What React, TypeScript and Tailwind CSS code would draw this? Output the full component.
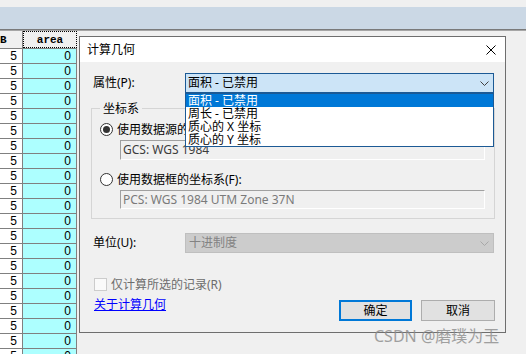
import * as React from "react"

const rows = Array.from({ length: 21 }, (_, i) => i)

const listItems = ["面积 - 已禁用", "周长 - 已禁用", "质心的 X 坐标", "质心的 Y 坐标"]

function Chevron({ color }: { color: string }) {
  return (
    <svg width="9" height="5" viewBox="0 0 9 5" className="shrink-0">
      <polyline points="0.5,0.5 4.5,4.5 8.5,0.5" fill="none" stroke={color} strokeWidth="1" />
    </svg>
  )
}

function AttributeTable() {
  return (
    <div className="flex w-[77px] shrink-0 flex-col font-['Liberation_Sans',sans-serif] text-[12px] text-black">
      <div className="flex h-[18px] border-b border-[#808080] bg-[#f0f0f0]">
        <div className="w-[23px] border-r border-[#808080] pt-[2px] font-['Liberation_Mono',monospace] text-[11px] font-bold leading-[14px]">
          B
        </div>
        <div className="flex w-[54px] items-center justify-center border border-dotted border-black font-['Liberation_Mono',monospace] text-[11px] font-bold leading-[14px]">
          area
        </div>
      </div>
      {rows.map((r) => (
        <div key={r} className="flex h-[15px] border-b border-[#808080]">
          <div className="w-[23px] border-r border-[#808080] bg-white pr-[5px] text-right leading-[14px]">
            5
          </div>
          <div className="w-[54px] border-r border-[#808080] bg-[#adffff] pr-[5px] text-right leading-[14px]">
            0
          </div>
        </div>
      ))}
    </div>
  )
}

function Radio({ checked }: { checked?: boolean }) {
  return (
    <span className="flex h-[13px] w-[13px] shrink-0 items-center justify-center rounded-full border border-[#333333] bg-white">
      {checked && <span className="h-[7px] w-[7px] rounded-full bg-[#333333]" />}
    </span>
  )
}

function GeometryDialog() {
  return (
    <div className="ml-[2px] mt-[5px] flex h-[297px] w-[427px] shrink-0 flex-col border border-[#6e6e6e] bg-[#f0f0f0] text-[12px] text-black">
      {/* title bar */}
      <div className="flex h-[25px] items-center justify-between bg-white pl-[7px] pr-[9px]">
        <span className="leading-[16px]">计算几何</span>
        <svg width="10" height="10" viewBox="0 0 10 10">
          <path d="M0.5 0.5 L9.5 9.5 M9.5 0.5 L0.5 9.5" stroke="#000" strokeWidth="1" />
        </svg>
      </div>

      <div className="relative flex flex-1 flex-col">
        {/* 属性 */}
        <div className="mt-[11px] flex h-[20px] items-center pl-[13px]">
          <span className="w-[92px] leading-[16px]">属性(P):</span>
          <div className="flex h-[20px] w-[309px] items-center justify-between border border-[#1c5a95] bg-[#cce4f7] pl-[2px] pr-[4px]">
            <span className="leading-[16px]">面积 - 已禁用</span>
            <Chevron color="#404040" />
          </div>
        </div>

        {/* 坐标系 group */}
        <div className="ml-[11px] mt-[15px] flex h-[111px] w-[404px] flex-col border border-[#d5d5d5]">
          <span className="-mt-[8px] ml-[8px] h-[16px] w-fit bg-[#f0f0f0] px-[3px] leading-[16px]">坐标系</span>
          <div className="mt-[5px] flex h-[15px] items-center gap-[4px] pl-[8px]">
            <Radio checked />
            <span className="leading-[16px]">使用数据源的坐标系(S):</span>
          </div>
          <div className="ml-[28px] mt-[3px] flex h-[20px] w-[365px] items-center border border-[#a0a0a0] border-b-white border-r-white pl-[2px] text-[#3c3c3c]">
            <span className="leading-[16px]">GCS: WGS 1984</span>
          </div>
          <div className="mt-[12px] flex h-[15px] items-center gap-[4px] pl-[8px]">
            <Radio />
            <span className="leading-[16px]">使用数据框的坐标系(F):</span>
          </div>
          <div className="ml-[28px] mt-[3px] flex h-[19px] w-[365px] items-center border border-[#a0a0a0] border-b-white border-r-white pl-[2px] text-[#7a7a7a]">
            <span className="leading-[16px]">PCS: WGS 1984 UTM Zone 37N</span>
          </div>
        </div>

        {/* 单位 */}
        <div className="mt-[14px] flex h-[20px] items-center pl-[13px]">
          <span className="w-[92px] leading-[16px]">单位(U):</span>
          <div className="flex h-[20px] w-[309px] items-center justify-between border border-[#bfbfbf] bg-[#cccccc] pl-[3px] pr-[4px] text-[#838383]">
            <span className="leading-[16px]">十进制度</span>
            <Chevron color="#a8a8a8" />
          </div>
        </div>

        {/* checkbox */}
        <div className="mt-[25px] flex h-[13px] items-center gap-[4px] pl-[14px]">
          <span className="h-[13px] w-[13px] shrink-0 border border-[#cccccc] bg-[#fafafa]" />
          <span className="leading-[16px] text-[#6d6d6d]">仅计算所选的记录(R)</span>
        </div>

        {/* link + buttons */}
        <div className="mt-[6px] flex items-start justify-between pl-[14px] pr-[10px]">
          <a className="leading-[16px] text-[#0000ff] underline">关于计算几何</a>
          <div className="mt-[3px] flex gap-[9px]">
            <button className="flex h-[21px] w-[73px] items-center justify-center border-2 border-[#0078d7] bg-[#e1e1e1] leading-[16px]">
              确定
            </button>
            <button className="flex h-[21px] w-[74px] items-center justify-center border border-[#adadad] bg-[#e1e1e1] leading-[16px]">
              取消
            </button>
          </div>
        </div>

        {/* open dropdown list */}
        <div className="absolute left-[105px] top-[31px] flex h-[54px] w-[309px] flex-col border border-[#1c5a95] bg-white">
          {listItems.map((item, i) => (
            <div
              key={item}
              className={
                i === 0
                  ? "h-[13px] bg-[#0078d7] pl-[2px] leading-[13px] text-white"
                  : "h-[13px] pl-[2px] leading-[13px] text-black"
              }
            >
              {item}
            </div>
          ))}
        </div>
      </div>
    </div>
  )
}

export default function App() {
  return (
    <div className="relative h-[354px] w-[526px] overflow-hidden bg-[#f0f0f0] font-['Noto_Sans','Noto_Sans_CJK_SC',sans-serif]">
      <div className="h-[7px] bg-[#f0f0f0]" />
      <div className="h-[22px] bg-[#cbd8e5]" />
      <div className="h-px bg-[#7a7a7a]" />
      <div className="h-px bg-[#a6a6a6]" />
      <div className="flex items-start">
        <AttributeTable />
        <GeometryDialog />
      </div>
      <span className="absolute left-[374px] top-[326px] text-[16px] leading-[20px] text-[#8c8c8c] opacity-80">
        CSDN @磨璞为玉
      </span>
    </div>
  )
}
